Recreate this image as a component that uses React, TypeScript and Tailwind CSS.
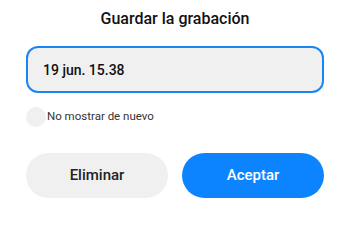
import { useState } from "react";

const App = () => {
  const [name, setName] = useState("19 jun. 15.38");
  const [dontShow, setDontShow] = useState(false);

  return (
    <div className="w-[350px] h-[211px] bg-white px-[26px] pt-[9px] font-['Roboto',sans-serif] flex flex-col">
      {/* Title */}
      <h1 className="text-center text-[16px] leading-[20px] font-medium text-[#111]">
        Guardar la grabación
      </h1>

      {/* Name input */}
      <input
        value={name}
        onChange={(e) => setName(e.target.value)}
        className="mt-[17px] h-[47px] w-full rounded-[12px] border-2 border-[#1a86f5] bg-[#f0f0f0] px-[15px] text-[14px] font-medium text-[#111] outline-none"
      />

      {/* Don't show again */}
      <label className="mt-[14px] flex items-center cursor-pointer">
        <button
          onClick={() => setDontShow(!dontShow)}
          className={`w-[20px] h-[20px] rounded-full ${dontShow ? "bg-[#0d84ff]" : "bg-[#f0f0f0]"}`}
        ></button>
        <span className="ml-[1px] text-[11.5px] text-[#333]">No mostrar de nuevo</span>
      </label>

      {/* Actions */}
      <div className="mt-[26px] grid grid-cols-2 gap-[14px]">
        <button className="h-[45px] rounded-full bg-[#f0f0f0] text-[15px] font-medium text-[#222]">
          Eliminar
        </button>
        <button className="h-[45px] rounded-full bg-[#0d84ff] text-[15px] font-medium text-white">
          Aceptar
        </button>
      </div>
    </div>
  );
};

export default App;
